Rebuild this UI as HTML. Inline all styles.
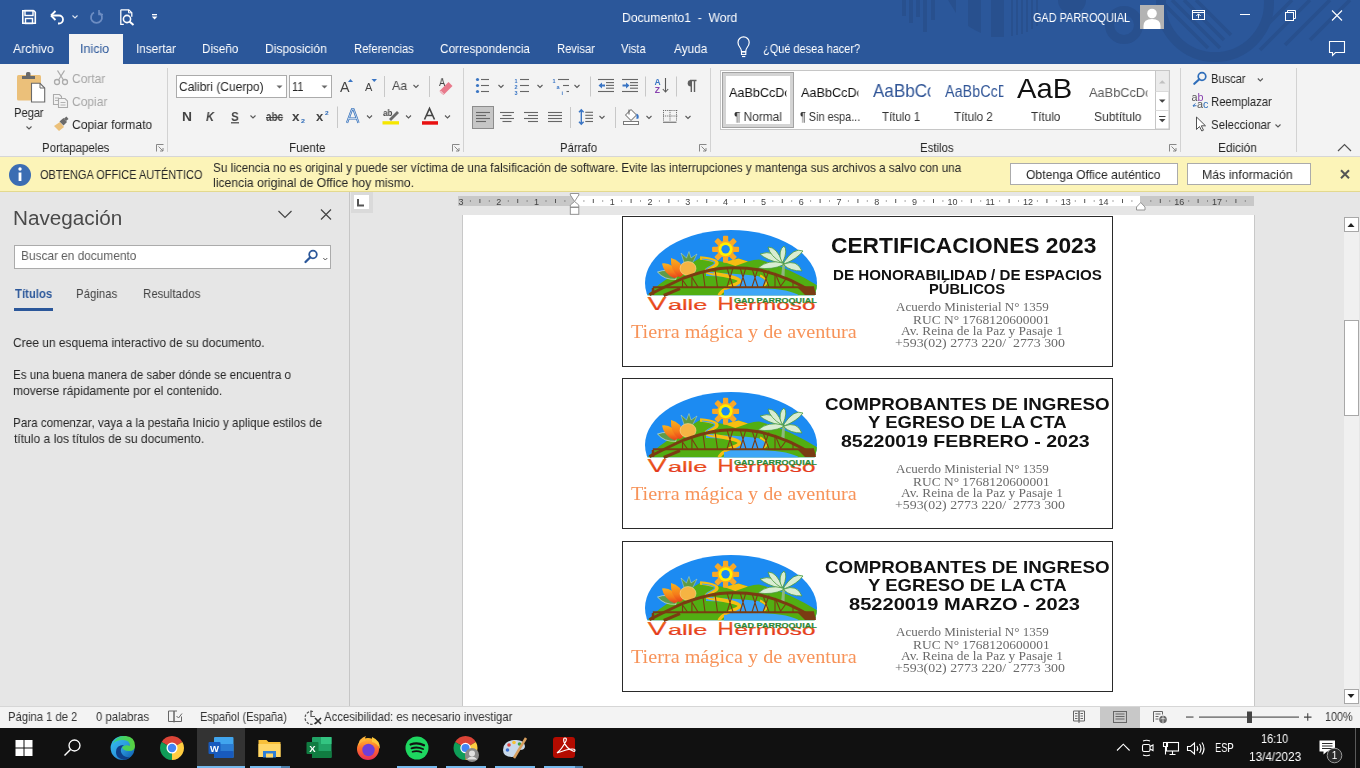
<!DOCTYPE html>
<html><head><meta charset="utf-8"><title>Documento1 - Word</title>
<style>
html,body{margin:0;padding:0;}
body{width:1360px;height:768px;overflow:hidden;position:relative;background:#E6E6E6;font-family:"Liberation Sans",sans-serif;}
.t{position:absolute;white-space:nowrap;transform-origin:0 0;will-change:transform;}
.a{position:absolute;}
svg{position:absolute;overflow:visible;}
</style></head><body>
<div class=a style='left:0px;top:0px;width:1360px;height:64px;background:#2B579A;'></div>
<svg style='left:880px;top:0px;' width='480' height='64' viewBox='880 0 480 64'>
<g fill='#28508E'>
<rect x='902' y='0' width='4' height='16'/>
<rect x='909' y='0' width='4' height='23'/>
<rect x='916' y='0' width='4' height='17'/>
<rect x='923' y='0' width='4' height='32'/>
<rect x='931' y='0' width='4' height='20'/>
<path d='M948 0 h8 v13 z'/>
<path d='M968 0 h13 v33 q-7 -3 -13 -7 z'/>
<path d='M991 0 h13 v37 h-13 z'/>
<rect x='1011' y='0' width='2' height='36'/>
<rect x='1016' y='0' width='2' height='35'/>
<rect x='1021' y='0' width='2' height='34'/>
<rect x='1026' y='0' width='2' height='32'/>
<rect x='1031' y='0' width='2' height='29'/>
<rect x='1036' y='0' width='2' height='26'/>
<circle cx='1072' cy='0' r='14'/>
</g>
<circle cx='1124' cy='25' r='14.5' fill='none' stroke='#28508E' stroke-width='9'/>
<circle cx='1215' cy='3' r='54' fill='none' stroke='#28508E' stroke-width='10'/>
<g stroke='#28508E' stroke-width='3.5'>
<path d='M1160 0 l48 48'/><path d='M1172 0 l48 48'/><path d='M1184 0 l40 40'/><path d='M1196 0 l35 35'/>
<path d='M1292 0 l-40 40'/><path d='M1310 0 l-50 50'/><path d='M1330 0 l-45 45'/><path d='M1350 0 l-40 40'/>
</g>
</svg>
<div class=a style='left:69px;top:34px;width:54px;height:30px;background:#F3F3F3;'></div>
<div class=a style='left:0px;top:64px;width:1360px;height:92px;background:#F3F3F3;'></div>
<div class=a style='left:0px;top:156px;width:1360px;height:1px;background:#D6D6D6;'></div>
<div class=a style='left:0px;top:157px;width:1360px;height:34px;background:#FCF4B8;'></div>
<div class=a style='left:0px;top:191px;width:1360px;height:1px;background:#E3D98F;'></div>
<div class=a style='left:0px;top:192px;width:349px;height:514px;background:#E6E6E6;'></div>
<div class=a style='left:349px;top:192px;width:1px;height:514px;background:#C6C6C6;'></div>
<div class=a style='left:350px;top:192px;width:1010px;height:514px;background:#E6E6E6;'></div>
<div class=a style='left:463px;top:215px;width:791px;height:491px;background:#FFFFFF;'></div>
<div class=a style='left:1254px;top:215px;width:1px;height:491px;background:#C8C8C8;'></div>
<div class=a style='left:462px;top:215px;width:1px;height:491px;background:#C8C8C8;'></div>
<div class=a style='left:351px;top:192px;width:22px;height:21px;background:#DADADA;'></div>
<div class=a style='left:354px;top:195px;width:15px;height:14px;background:#FFFFFF;'></div>
<div class=a style='left:458px;top:196px;width:796px;height:10px;background:#C8C8C8;'></div>
<div class=a style='left:575px;top:196px;width:565px;height:10px;background:#FFFFFF;'></div>
<div class=a style='left:1344px;top:232px;width:15px;height:457px;background:#F0F0F0;'></div>
<div class=a style='left:1344px;top:217px;width:15px;height:15px;background:#FFFFFF;box-sizing:border-box;border:1px solid #A8A8A8;'></div>
<div class=a style='left:1344px;top:689px;width:15px;height:15px;background:#FFFFFF;box-sizing:border-box;border:1px solid #A8A8A8;'></div>
<div class=a style='left:1344px;top:320px;width:15px;height:96px;background:#FFFFFF;box-sizing:border-box;border:1px solid #A8A8A8;'></div>
<div class=a style='left:0px;top:706px;width:1360px;height:22px;background:#F3F3F3;'></div>
<div class=a style='left:0px;top:706px;width:1360px;height:1px;background:#D6D6D6;'></div>
<div class=a style='left:1100px;top:707px;width:40px;height:21px;background:#C8C8C8;'></div>
<div class=a style='left:0px;top:728px;width:1360px;height:40px;background:#111111;'></div>
<div class=a style='left:197px;top:728px;width:48px;height:40px;background:#333333;'></div>
<div class=a style='left:176px;top:75px;width:111px;height:23px;background:#FFFFFF;box-sizing:border-box;border:1px solid #ABABAB;'></div>
<div class=a style='left:289px;top:75px;width:43px;height:23px;background:#FFFFFF;box-sizing:border-box;border:1px solid #ABABAB;'></div>
<div class=a style='left:720px;top:70px;width:450px;height:60px;background:#FFFFFF;box-sizing:border-box;border:1px solid #C6C6C6;'></div>
<div class=a style='left:1010px;top:163px;width:168px;height:22px;background:#FFFFFF;box-sizing:border-box;border:1px solid #ABABAB;'></div>
<div class=a style='left:1187px;top:163px;width:124px;height:22px;background:#FFFFFF;box-sizing:border-box;border:1px solid #ABABAB;'></div>
<div class=a style='left:14px;top:245px;width:317px;height:24px;background:#FFFFFF;box-sizing:border-box;border:1px solid #ABABAB;'></div>
<div class=a style='left:621.5px;top:215.5px;width:491px;height:151px;background:transparent;box-sizing:border-box;border:1.5px solid #2A2A2A;'></div>
<div class=a style='left:621.5px;top:377.5px;width:491px;height:151px;background:transparent;box-sizing:border-box;border:1.5px solid #2A2A2A;'></div>
<div class=a style='left:621.5px;top:540.5px;width:491px;height:151px;background:transparent;box-sizing:border-box;border:1.5px solid #2A2A2A;'></div>
<svg style='left:0;top:0' width='1' height='1'>
<defs>
<clipPath id='domeclip'><path d='M640 295.3 V226 H822 V295.3 Z'/></clipPath>
<clipPath id='domeclip2'><ellipse cx='731' cy='283' rx='86' ry='53'/></clipPath>
<linearGradient id='vh' x1='0' y1='0' x2='0' y2='1'><stop offset='0' stop-color='#F26E1E'/><stop offset='1' stop-color='#DF2A1B'/></linearGradient>
<linearGradient id='pet' x1='0' y1='0' x2='0' y2='1'><stop offset='0' stop-color='#F9B21C'/><stop offset='0.6' stop-color='#F57C1A'/><stop offset='1' stop-color='#E8401A'/></linearGradient>
<symbol id='logo' viewBox='630 220 200 100' width='200' height='100'>
<g clip-path='url(#domeclip)'><g clip-path='url(#domeclip2)'>
<rect x='640' y='226' width='182' height='70' fill='#1C8BF2'/>
<!-- hills -->
<path d='M640 296 L648 295 Q660 282 672 276 Q686 266 700 258 L724 262 L738.5 258.6 L748 261.4 Q754 259.5 759 259.4 Q790 268 818 286 L818 296 Z' fill='#52AE12'/>
<path d='M724 262 L738.5 258.6 L748 261.4 L735.3 265.9 Z' fill='#F7BE12'/>
<!-- road and river -->
<path d='M706 273 Q735 273 758 276 Q770 281 764 286 Q756 290 800 296 L724 296 Q722 291 734 286 Q746 281 738 278 Q722 276 706 276 Z' fill='#39A2F6'/>
<path d='M700 258 C712 259 724 262 712 267 C702 271 706 273 716 274 C735 277 748 280 733 285 C724 289 720 292 719 296' fill='none' stroke='#F7BE12' stroke-width='3.4'/>
<path d='M702 259 C712 260 720 262 710 266.5 C703 270 706 272 714 273' fill='none' stroke='#3FA3F0' stroke-width='1.1'/>
<path d='M760 275.5 Q771 281 764 286' fill='none' stroke='#F7BE12' stroke-width='2'/>
<path d='M724 290 Q740 287 760 288 Q790 289 800 296 L724 296 Z' fill='#3EA6F7'/>
</g></g>
<!-- sun -->
<g transform='translate(725.6 249.3)'>
<g fill='#F8A826'>
<rect x='-2.6' y='-13.5' width='5.2' height='27' rx='1'/>
<rect x='-2.6' y='-13.5' width='5.2' height='27' rx='1' transform='rotate(45)'/>
<rect x='-2.6' y='-13.5' width='5.2' height='27' rx='1' transform='rotate(90)'/>
<rect x='-2.6' y='-13.5' width='5.2' height='27' rx='1' transform='rotate(135)'/>
</g>
<circle r='8.5' fill='#F8A826'/>
<circle r='7' fill='#FFEF00'/>
<circle r='4.2' fill='#1C8BF2'/>
</g>
<!-- palm tree -->
<path d='M781 278 L782.5 263 L785 263 L784.5 278 Z' fill='#8DB87E'/>
<g fill='#D9EDD2' stroke='#4A9A3C' stroke-width='0.8'>
<path d='M783 262 Q774 249 760 254 Q766 260 783 264 Z'/>
<path d='M783 263 Q768 259 758 268 Q772 270 783 265 Z'/>
<path d='M783 262 Q788 250 784 246 Q778 250 781 262 Z'/>
<path d='M784 262 Q794 247 803 251 Q797 259 784 264 Z'/>
<path d='M784 264 Q797 259 802 271 Q790 271 784 265 Z'/>
<path d='M782 262 Q777 247 768 247 Q770 256 782 263 Z'/>
</g>
<!-- flower -->
<path d='M657.5 272 Q668 268 676 274 L676 279.4 Q664 280 657.5 272 Z' fill='#5E9B4A' stroke='#E6EEDF' stroke-width='0.6'/>
<path d='M662 263.5 Q672 262 679 274 Q678 278 674 278 Q664 274 662 263.5 Z' fill='url(#pet)'/>
<path d='M671 258 Q681 260 684 272 Q683 277 679 277 Q670 270 671 258 Z' fill='url(#pet)'/>
<!-- pineapple -->
<path d='M684.5 264 L681 253 L686.5 258 L689 251.5 L691 258 L697 254 L692 264 Z' fill='#5E9A44' stroke='#D8E8D0' stroke-width='0.4'/>
<ellipse cx='688' cy='268.5' rx='8' ry='7' fill='#F5B443' stroke='#FBE4A8' stroke-width='0.5'/>
<!-- bridge -->
<g fill='none' stroke='#7A3C12'>
<path d='M649.4 294.7 Q671 283.7 683.7 278 Q702 271 720 268.4 Q740 266.5 760 270 Q790 277 815 294' stroke-width='3'/>
<path d='M652.8 287.2 H814' stroke-width='2'/>
<path d='M663.7 295.5 L680 288.7' stroke-width='3'/>
<path d='M653 288 V295' stroke-width='2.5'/>
<g stroke-width='1.1'>
<path d='M682.5 278 V287 M682.5 280 L687.5 287 M691.9 276 V287 M691.9 277 L698 287 M703 272 L705 287 M715 269.5 L717.5 287'/>
<path d='M727 268 L733 287 M733 268 L727 287 M740 267.5 L746 287 M746 267.5 L740 287 M752 268.5 L758 287 M758 268.5 L752 287 M763 270.5 L769 287 M769 270.5 L763 287'/>
<path d='M775 273 V287 M787 277.5 L780 287 M793 281 V287 M775 273 L781 287'/>
</g>
</g>
<path d='M797 287 H814 L816 295 H805 Z' fill='#7A3C12'/>
<!-- text -->
<g fill='url(#vh)' font-family='Liberation Sans' stroke='url(#vh)' stroke-width='0.2'>
<text x='647.5' y='309.8' font-size='18.2' textLength='19' lengthAdjust='spacingAndGlyphs'>V</text>
<text x='667.9' y='309.8' font-size='14.6' textLength='39.4' lengthAdjust='spacingAndGlyphs'>alle</text>
<text x='717.6' y='309.8' font-size='18.2' textLength='16.3' lengthAdjust='spacingAndGlyphs'>H</text>
<text x='734.5' y='309.8' font-size='14.6' textLength='81' lengthAdjust='spacingAndGlyphs'>ermoso</text>
</g>
<text x='734' y='302.6' font-family='Liberation Sans' font-weight='bold' font-size='7' fill='#2A8A36' stroke='#2A8A36' stroke-width='0.2' textLength='82.7' lengthAdjust='spacingAndGlyphs'>GAD PARROQUIAL</text>
</symbol>
</defs></svg>
<svg style='left:630px;top:220px' width='200' height='100'><use href='#logo' x='0' y='0'/></svg>
<svg style='left:630px;top:382px' width='200' height='100'><use href='#logo' x='0' y='0'/></svg>
<svg style='left:630px;top:545px' width='200' height='100'><use href='#logo' x='0' y='0'/></svg>
<div class=t style='left:622.46px;top:10.95px;font-family:"Liberation Sans", sans-serif;font-size:13px;line-height:13px;color:#FFFFFF;font-weight:normal;font-style:normal;transform:scaleX(0.9352);'>Documento1&nbsp; -&nbsp; Word</div><div class=t style='left:1032.91px;top:10.95px;font-family:"Liberation Sans", sans-serif;font-size:13px;line-height:13px;color:#FFFFFF;font-weight:normal;font-style:normal;transform:scaleX(0.8370);'>GAD PARROQUIAL</div><div class=t style='left:13.00px;top:41.95px;font-family:"Liberation Sans", sans-serif;font-size:13px;line-height:13px;color:#FFFFFF;font-weight:normal;font-style:normal;transform:scaleX(0.9419);'>Archivo</div><div class=t style='left:136.09px;top:41.95px;font-family:"Liberation Sans", sans-serif;font-size:13px;line-height:13px;color:#FFFFFF;font-weight:normal;font-style:normal;transform:scaleX(0.9070);'>Insertar</div><div class=t style='left:202.10px;top:41.95px;font-family:"Liberation Sans", sans-serif;font-size:13px;line-height:13px;color:#FFFFFF;font-weight:normal;font-style:normal;transform:scaleX(0.8974);'>Diseño</div><div class=t style='left:265.07px;top:41.95px;font-family:"Liberation Sans", sans-serif;font-size:13px;line-height:13px;color:#FFFFFF;font-weight:normal;font-style:normal;transform:scaleX(0.9308);'>Disposición</div><div class=t style='left:353.54px;top:41.95px;font-family:"Liberation Sans", sans-serif;font-size:13px;line-height:13px;color:#FFFFFF;font-weight:normal;font-style:normal;transform:scaleX(0.8618);'>Referencias</div><div class=t style='left:440.09px;top:41.95px;font-family:"Liberation Sans", sans-serif;font-size:13px;line-height:13px;color:#FFFFFF;font-weight:normal;font-style:normal;transform:scaleX(0.9082);'>Correspondencia</div><div class=t style='left:557.14px;top:41.95px;font-family:"Liberation Sans", sans-serif;font-size:13px;line-height:13px;color:#FFFFFF;font-weight:normal;font-style:normal;transform:scaleX(0.8605);'>Revisar</div><div class=t style='left:621.00px;top:41.95px;font-family:"Liberation Sans", sans-serif;font-size:13px;line-height:13px;color:#FFFFFF;font-weight:normal;font-style:normal;transform:scaleX(0.8621);'>Vista</div><div class=t style='left:674.00px;top:41.95px;font-family:"Liberation Sans", sans-serif;font-size:13px;line-height:13px;color:#FFFFFF;font-weight:normal;font-style:normal;transform:scaleX(0.9054);'>Ayuda</div><div class=t style='left:762.75px;top:41.95px;font-family:"Liberation Sans", sans-serif;font-size:13px;line-height:13px;color:#FFFFFF;font-weight:normal;font-style:normal;transform:scaleX(0.8456);'>¿Qué desea hacer?</div><div class=t style='left:80.03px;top:41.95px;font-family:"Liberation Sans", sans-serif;font-size:13px;line-height:13px;color:#2B579A;font-weight:normal;font-style:normal;transform:scaleX(0.9655);'>Inicio</div><div class=t style='left:13.90px;top:105.95px;font-family:"Liberation Sans", sans-serif;font-size:13px;line-height:13px;color:#262626;font-weight:normal;font-style:normal;transform:scaleX(0.8529);'>Pegar</div><div class=t style='left:71.83px;top:71.95px;font-family:"Liberation Sans", sans-serif;font-size:13px;line-height:13px;color:#A6A6A6;font-weight:normal;font-style:normal;transform:scaleX(0.9214);'>Cortar</div><div class=t style='left:71.82px;top:94.95px;font-family:"Liberation Sans", sans-serif;font-size:13px;line-height:13px;color:#A6A6A6;font-weight:normal;font-style:normal;transform:scaleX(0.9257);'>Copiar</div><div class=t style='left:71.82px;top:117.95px;font-family:"Liberation Sans", sans-serif;font-size:13px;line-height:13px;color:#262626;font-weight:normal;font-style:normal;transform:scaleX(0.9324);'>Copiar formato</div><div class=t style='left:41.62px;top:140.95px;font-family:"Liberation Sans", sans-serif;font-size:13px;line-height:13px;color:#262626;font-weight:normal;font-style:normal;transform:scaleX(0.8787);'>Portapapeles</div><div class=t style='left:178.68px;top:79.95px;font-family:"Liberation Sans", sans-serif;font-size:13px;line-height:13px;color:#262626;font-weight:normal;font-style:normal;transform:scaleX(0.9211);'>Calibri (Cuerpo)</div><div class=t style='left:291.95px;top:79.95px;font-family:"Liberation Sans", sans-serif;font-size:13px;line-height:13px;color:#262626;font-weight:normal;font-style:normal;transform:scaleX(0.8500);'>11</div><div class=t style='left:288.60px;top:140.95px;font-family:"Liberation Sans", sans-serif;font-size:13px;line-height:13px;color:#262626;font-weight:normal;font-style:normal;transform:scaleX(0.9026);'>Fuente</div><div class=t style='left:559.53px;top:140.95px;font-family:"Liberation Sans", sans-serif;font-size:13px;line-height:13px;color:#262626;font-weight:normal;font-style:normal;transform:scaleX(0.8683);'>Párrafo</div><div class=t style='left:733.90px;top:109.95px;font-family:"Liberation Sans", sans-serif;font-size:13px;line-height:13px;color:#333333;font-weight:normal;font-style:normal;transform:scaleX(0.9135);'>¶ Normal</div><div class=t style='left:799.60px;top:109.95px;font-family:"Liberation Sans", sans-serif;font-size:13px;line-height:13px;color:#333333;font-weight:normal;font-style:normal;transform:scaleX(0.8366);'>¶ Sin espa...</div><div class=t style='left:882.00px;top:109.95px;font-family:"Liberation Sans", sans-serif;font-size:13px;line-height:13px;color:#333333;font-weight:normal;font-style:normal;transform:scaleX(0.8837);'>Título 1</div><div class=t style='left:954.00px;top:109.95px;font-family:"Liberation Sans", sans-serif;font-size:13px;line-height:13px;color:#333333;font-weight:normal;font-style:normal;transform:scaleX(0.8953);'>Título 2</div><div class=t style='left:1031.30px;top:109.95px;font-family:"Liberation Sans", sans-serif;font-size:13px;line-height:13px;color:#333333;font-weight:normal;font-style:normal;transform:scaleX(0.9031);'>Título</div><div class=t style='left:1093.77px;top:109.95px;font-family:"Liberation Sans", sans-serif;font-size:13px;line-height:13px;color:#333333;font-weight:normal;font-style:normal;transform:scaleX(0.9260);'>Subtítulo</div><div class=t style='left:920.12px;top:140.95px;font-family:"Liberation Sans", sans-serif;font-size:13px;line-height:13px;color:#262626;font-weight:normal;font-style:normal;transform:scaleX(0.8784);'>Estilos</div><div class=t style='left:1210.85px;top:71.95px;font-family:"Liberation Sans", sans-serif;font-size:13px;line-height:13px;color:#262626;font-weight:normal;font-style:normal;transform:scaleX(0.8500);'>Buscar</div><div class=t style='left:1210.83px;top:94.95px;font-family:"Liberation Sans", sans-serif;font-size:13px;line-height:13px;color:#262626;font-weight:normal;font-style:normal;transform:scaleX(0.8681);'>Reemplazar</div><div class=t style='left:1210.82px;top:117.95px;font-family:"Liberation Sans", sans-serif;font-size:13px;line-height:13px;color:#262626;font-weight:normal;font-style:normal;transform:scaleX(0.8806);'>Seleccionar</div><div class=t style='left:1218.39px;top:140.95px;font-family:"Liberation Sans", sans-serif;font-size:13px;line-height:13px;color:#262626;font-weight:normal;font-style:normal;transform:scaleX(0.9098);'>Edición</div><div class=t style='left:39.95px;top:168.45px;font-family:"Liberation Sans", sans-serif;font-size:13px;line-height:13px;color:#262626;font-weight:normal;font-style:normal;transform:scaleX(0.8455);'>OBTENGA OFFICE AUTÉNTICO</div><div class=t style='left:212.80px;top:160.95px;font-family:"Liberation Sans", sans-serif;font-size:13px;line-height:13px;color:#262626;font-weight:normal;font-style:normal;transform:scaleX(0.9028);'>Su licencia no es original y puede ser víctima de una falsificación de software. Evite las interrupciones y mantenga sus archivos a salvo con una</div><div class=t style='left:212.76px;top:176.45px;font-family:"Liberation Sans", sans-serif;font-size:13px;line-height:13px;color:#262626;font-weight:normal;font-style:normal;transform:scaleX(0.9377);'>licencia original de Office hoy mismo.</div><div class=t style='left:1025.56px;top:167.95px;font-family:"Liberation Sans", sans-serif;font-size:13px;line-height:13px;color:#262626;font-weight:normal;font-style:normal;transform:scaleX(0.9373);'>Obtenga Office auténtico</div><div class=t style='left:1202.05px;top:167.95px;font-family:"Liberation Sans", sans-serif;font-size:13px;line-height:13px;color:#262626;font-weight:normal;font-style:normal;transform:scaleX(0.9500);'>Más información</div><div class=t style='left:12.83px;top:208.00px;font-family:"Liberation Sans", sans-serif;font-size:20px;line-height:20px;color:#4A4A4A;font-weight:normal;font-style:normal;transform:scaleX(1.0350);'>Navegación</div><div class=t style='left:20.99px;top:249.15px;font-family:"Liberation Sans", sans-serif;font-size:13px;line-height:13px;color:#5F5F5F;font-weight:normal;font-style:normal;transform:scaleX(0.9120);'>Buscar en documento</div><div class=t style='left:14.90px;top:287.25px;font-family:"Liberation Sans", sans-serif;font-size:13px;line-height:13px;color:#2B579A;font-weight:bold;font-style:normal;transform:scaleX(0.8714);'>Títulos</div><div class=t style='left:76.32px;top:287.25px;font-family:"Liberation Sans", sans-serif;font-size:13px;line-height:13px;color:#444444;font-weight:normal;font-style:normal;transform:scaleX(0.8783);'>Páginas</div><div class=t style='left:143.22px;top:287.25px;font-family:"Liberation Sans", sans-serif;font-size:13px;line-height:13px;color:#444444;font-weight:normal;font-style:normal;transform:scaleX(0.8844);'>Resultados</div><div class=t style='left:13.28px;top:336.35px;font-family:"Liberation Sans", sans-serif;font-size:13px;line-height:13px;color:#262626;font-weight:normal;font-style:normal;transform:scaleX(0.9210);'>Cree un esquema interactivo de su documento.</div><div class=t style='left:13.31px;top:367.95px;font-family:"Liberation Sans", sans-serif;font-size:13px;line-height:13px;color:#262626;font-weight:normal;font-style:normal;transform:scaleX(0.8923);'>Es una buena manera de saber dónde se encuentra o</div><div class=t style='left:13.27px;top:383.95px;font-family:"Liberation Sans", sans-serif;font-size:13px;line-height:13px;color:#262626;font-weight:normal;font-style:normal;transform:scaleX(0.9287);'>moverse rápidamente por el contenido.</div><div class=t style='left:13.30px;top:415.65px;font-family:"Liberation Sans", sans-serif;font-size:13px;line-height:13px;color:#262626;font-weight:normal;font-style:normal;transform:scaleX(0.8965);'>Para comenzar, vaya a la pestaña Inicio y aplique estilos de</div><div class=t style='left:14.20px;top:431.55px;font-family:"Liberation Sans", sans-serif;font-size:13px;line-height:13px;color:#262626;font-weight:normal;font-style:normal;transform:scaleX(0.9294);'>título a los títulos de su documento.</div><div class=t style='left:7.74px;top:709.95px;font-family:"Liberation Sans", sans-serif;font-size:13px;line-height:13px;color:#333333;font-weight:normal;font-style:normal;transform:scaleX(0.8633);'>Página 1 de 2</div><div class=t style='left:95.50px;top:709.95px;font-family:"Liberation Sans", sans-serif;font-size:13px;line-height:13px;color:#333333;font-weight:normal;font-style:normal;transform:scaleX(0.8750);'>0 palabras</div><div class=t style='left:199.86px;top:709.95px;font-family:"Liberation Sans", sans-serif;font-size:13px;line-height:13px;color:#333333;font-weight:normal;font-style:normal;transform:scaleX(0.8402);'>Español (España)</div><div class=t style='left:324.20px;top:709.95px;font-family:"Liberation Sans", sans-serif;font-size:13px;line-height:13px;color:#333333;font-weight:normal;font-style:normal;transform:scaleX(0.8718);'>Accesibilidad: es necesario investigar</div><div class=t style='left:1324.97px;top:709.95px;font-family:"Liberation Sans", sans-serif;font-size:13px;line-height:13px;color:#333333;font-weight:normal;font-style:normal;transform:scaleX(0.8281);'>100%</div><div class=t style='left:1214.93px;top:741.80px;font-family:"Liberation Sans", sans-serif;font-size:12px;line-height:12px;color:#FFFFFF;font-weight:normal;font-style:normal;transform:scaleX(0.7739);'>ESP</div><div class=t style='left:1261.09px;top:732.80px;font-family:"Liberation Sans", sans-serif;font-size:12px;line-height:12px;color:#FFFFFF;font-weight:normal;font-style:normal;transform:scaleX(0.9069);'>16:10</div><div class=t style='left:1249.02px;top:750.80px;font-family:"Liberation Sans", sans-serif;font-size:12px;line-height:12px;color:#FFFFFF;font-weight:normal;font-style:normal;transform:scaleX(0.9769);'>13/4/2023</div><div class=t style='left:831.37px;top:235.10px;font-family:"Liberation Sans", sans-serif;font-size:22px;line-height:22px;color:#111111;font-weight:bold;font-style:normal;transform:scaleX(1.0337);'>CERTIFICACIONES 2023</div><div class=t style='left:832.82px;top:268.10px;font-family:"Liberation Sans", sans-serif;font-size:14px;line-height:14px;color:#111111;font-weight:bold;font-style:normal;transform:scaleX(1.0814);'>DE HONORABILIDAD / DE ESPACIOS</div><div class=t style='left:928.75px;top:282.40px;font-family:"Liberation Sans", sans-serif;font-size:14px;line-height:14px;color:#111111;font-weight:bold;font-style:normal;transform:scaleX(1.0507);'>PÚBLICOS</div><div class=t style='left:896.26px;top:302.45px;font-family:"Liberation Serif", serif;font-size:11.5px;line-height:11.5px;color:#6A6A6A;font-weight:normal;font-style:normal;transform:scaleX(1.1353);'>Acuerdo Ministerial N° 1359</div><div class=t style='left:913.43px;top:314.65px;font-family:"Liberation Serif", serif;font-size:11.5px;line-height:11.5px;color:#6A6A6A;font-weight:normal;font-style:normal;transform:scaleX(1.1670);'>RUC N° 1768120600001</div><div class=t style='left:900.84px;top:326.45px;font-family:"Liberation Serif", serif;font-size:11.5px;line-height:11.5px;color:#6A6A6A;font-weight:normal;font-style:normal;transform:scaleX(1.1650);'>Av. Reina de la Paz y Pasaje 1</div><div class=t style='left:894.99px;top:338.45px;font-family:"Liberation Serif", serif;font-size:11.5px;line-height:11.5px;color:#6A6A6A;font-weight:normal;font-style:normal;transform:scaleX(1.2057);'>+593(02) 2773 220/&nbsp; 2773 300</div><div class=t style='left:631.40px;top:322.13px;font-family:"Liberation Serif", serif;font-size:19px;line-height:19px;color:#F79359;font-weight:normal;font-style:normal;transform:scaleX(1.0627);'>Tierra mágica y de aventura</div><div class=t style='left:824.70px;top:395.95px;font-family:"Liberation Sans", sans-serif;font-size:17px;line-height:17px;color:#111111;font-weight:bold;font-style:normal;transform:scaleX(1.1035);'>COMPROBANTES DE INGRESO</div><div class=t style='left:868.00px;top:413.95px;font-family:"Liberation Sans", sans-serif;font-size:17px;line-height:17px;color:#111111;font-weight:bold;font-style:normal;transform:scaleX(1.0912);'>Y EGRESO DE LA CTA</div><div class=t style='left:840.60px;top:433.05px;font-family:"Liberation Sans", sans-serif;font-size:17px;line-height:17px;color:#111111;font-weight:bold;font-style:normal;transform:scaleX(1.1491);'>85220019 FEBRERO - 2023</div><div class=t style='left:896.26px;top:464.45px;font-family:"Liberation Serif", serif;font-size:11.5px;line-height:11.5px;color:#6A6A6A;font-weight:normal;font-style:normal;transform:scaleX(1.1353);'>Acuerdo Ministerial N° 1359</div><div class=t style='left:913.43px;top:476.65px;font-family:"Liberation Serif", serif;font-size:11.5px;line-height:11.5px;color:#6A6A6A;font-weight:normal;font-style:normal;transform:scaleX(1.1670);'>RUC N° 1768120600001</div><div class=t style='left:900.84px;top:488.45px;font-family:"Liberation Serif", serif;font-size:11.5px;line-height:11.5px;color:#6A6A6A;font-weight:normal;font-style:normal;transform:scaleX(1.1650);'>Av. Reina de la Paz y Pasaje 1</div><div class=t style='left:894.99px;top:500.45px;font-family:"Liberation Serif", serif;font-size:11.5px;line-height:11.5px;color:#6A6A6A;font-weight:normal;font-style:normal;transform:scaleX(1.2057);'>+593(02) 2773 220/&nbsp; 2773 300</div><div class=t style='left:631.40px;top:484.13px;font-family:"Liberation Serif", serif;font-size:19px;line-height:19px;color:#F79359;font-weight:normal;font-style:normal;transform:scaleX(1.0627);'>Tierra mágica y de aventura</div><div class=t style='left:824.70px;top:558.95px;font-family:"Liberation Sans", sans-serif;font-size:17px;line-height:17px;color:#111111;font-weight:bold;font-style:normal;transform:scaleX(1.1035);'>COMPROBANTES DE INGRESO</div><div class=t style='left:868.00px;top:576.95px;font-family:"Liberation Sans", sans-serif;font-size:17px;line-height:17px;color:#111111;font-weight:bold;font-style:normal;transform:scaleX(1.0912);'>Y EGRESO DE LA CTA</div><div class=t style='left:849.30px;top:596.05px;font-family:"Liberation Sans", sans-serif;font-size:17px;line-height:17px;color:#111111;font-weight:bold;font-style:normal;transform:scaleX(1.1810);'>85220019 MARZO - 2023</div><div class=t style='left:896.26px;top:627.46px;font-family:"Liberation Serif", serif;font-size:11.5px;line-height:11.5px;color:#6A6A6A;font-weight:normal;font-style:normal;transform:scaleX(1.1353);'>Acuerdo Ministerial N° 1359</div><div class=t style='left:913.43px;top:639.66px;font-family:"Liberation Serif", serif;font-size:11.5px;line-height:11.5px;color:#6A6A6A;font-weight:normal;font-style:normal;transform:scaleX(1.1670);'>RUC N° 1768120600001</div><div class=t style='left:900.84px;top:651.46px;font-family:"Liberation Serif", serif;font-size:11.5px;line-height:11.5px;color:#6A6A6A;font-weight:normal;font-style:normal;transform:scaleX(1.1650);'>Av. Reina de la Paz y Pasaje 1</div><div class=t style='left:894.99px;top:663.46px;font-family:"Liberation Serif", serif;font-size:11.5px;line-height:11.5px;color:#6A6A6A;font-weight:normal;font-style:normal;transform:scaleX(1.2057);'>+593(02) 2773 220/&nbsp; 2773 300</div><div class=t style='left:631.40px;top:647.13px;font-family:"Liberation Serif", serif;font-size:19px;line-height:19px;color:#F79359;font-weight:normal;font-style:normal;transform:scaleX(1.0627);'>Tierra mágica y de aventura</div><div class=t style='left:181.84px;top:109.95px;font-family:"Liberation Sans", sans-serif;font-size:13px;line-height:13px;color:#444444;font-weight:bold;font-style:normal;transform:scaleX(1.0625);'>N</div><div class=t style='left:205.90px;top:109.95px;font-family:"Liberation Sans", sans-serif;font-size:13px;line-height:13px;color:#444444;font-weight:bold;font-style:italic;transform:scaleX(0.8500);'>K</div><div class=t style='left:231.10px;top:109.95px;font-family:"Liberation Sans", sans-serif;font-size:13px;line-height:13px;color:#444444;font-weight:bold;font-style:normal;transform:scaleX(0.9000);'>S</div><div class=t style='left:266.00px;top:110.80px;font-family:"Liberation Sans", sans-serif;font-size:12px;line-height:12px;color:#444444;font-weight:bold;font-style:normal;transform:scaleX(0.8200);text-decoration:line-through;'>abc</div><div class=t style='left:292.10px;top:109.95px;font-family:"Liberation Sans", sans-serif;font-size:13px;line-height:13px;color:#444444;font-weight:bold;font-style:normal;transform:scaleX(1.0429);'>x</div><div class=t style='left:300.60px;top:117.70px;font-family:"Liberation Sans", sans-serif;font-size:6px;line-height:6px;color:#2E6BB8;font-weight:bold;font-style:normal;transform:scaleX(1.2000);'>2</div><div class=t style='left:316.40px;top:109.95px;font-family:"Liberation Sans", sans-serif;font-size:13px;line-height:13px;color:#444444;font-weight:bold;font-style:normal;transform:scaleX(0.9857);'>x</div><div class=t style='left:324.90px;top:109.80px;font-family:"Liberation Sans", sans-serif;font-size:6px;line-height:6px;color:#2E6BB8;font-weight:bold;font-style:normal;transform:scaleX(1.1000);'>2</div><div class=t style='left:340.30px;top:79.90px;font-family:"Liberation Sans", sans-serif;font-size:14px;line-height:14px;color:#444444;font-weight:normal;font-style:normal;transform:scaleX(1.0222);'>A</div><div class=t style='left:365.30px;top:82.45px;font-family:"Liberation Sans", sans-serif;font-size:11px;line-height:11px;color:#444444;font-weight:normal;font-style:normal;transform:scaleX(0.9857);'>A</div><div class=t style='left:392.00px;top:78.85px;font-family:"Liberation Sans", sans-serif;font-size:13px;line-height:13px;color:#4A4A4A;font-weight:normal;font-style:normal;transform:scaleX(0.9500);'>Aa</div><div class=t style='left:438.90px;top:77.35px;font-family:"Liberation Sans", sans-serif;font-size:11px;line-height:11px;color:#444444;font-weight:normal;font-style:normal;transform:scaleX(0.8429);'>A</div><div class=t style='left:383.00px;top:109.35px;font-family:"Liberation Sans", sans-serif;font-size:9px;line-height:9px;color:#444444;font-weight:bold;font-style:normal;transform:scaleX(0.9000);'>ab</div><div class=t style='left:728.80px;top:85.53px;font-family:"Liberation Sans", sans-serif;font-size:13.5px;line-height:13.5px;color:#111111;font-weight:normal;font-style:normal;transform:scaleX(0.9356);'>AaBbCcDc</div><div class=t style='left:800.60px;top:85.53px;font-family:"Liberation Sans", sans-serif;font-size:13.5px;line-height:13.5px;color:#111111;font-weight:normal;font-style:normal;transform:scaleX(0.9390);'>AaBbCcDc</div><div class=t style='left:873.00px;top:82.28px;font-family:"Liberation Sans", sans-serif;font-size:18.5px;line-height:18.5px;color:#2F5496;font-weight:normal;font-style:normal;transform:scaleX(0.9224);'>AaBbCc</div><div class=t style='left:944.50px;top:83.90px;font-family:"Liberation Sans", sans-serif;font-size:16px;line-height:16px;color:#2F5496;font-weight:normal;font-style:normal;transform:scaleX(0.8983);'>AaBbCcD</div><div class=t style='left:1016.90px;top:74.62px;font-family:"Liberation Sans", sans-serif;font-size:27.5px;line-height:27.5px;color:#111111;font-weight:normal;font-style:normal;transform:scaleX(1.0618);'>AaB</div><div class=t style='left:1089.30px;top:85.69px;font-family:"Liberation Sans", sans-serif;font-size:13.3px;line-height:13.3px;color:#5A5A5A;font-weight:normal;font-style:normal;transform:scaleX(0.9603);'>AaBbCcDc</div>
<svg style='left:0px;top:0px;' width='200' height='32' viewBox='0 0 200 32'>
<g fill='none' stroke='#fff' stroke-width='1.6'>
<path d='M22.8 10.8 h11 l1.5 1.5 v11 h-12.5 z'/>
</g>
<rect x='25' y='10.5' width='8' height='5' fill='none' stroke='#fff' stroke-width='1.4'/>
<rect x='25.5' y='18.5' width='7' height='5' fill='none' stroke='#fff' stroke-width='1.4'/>
<path d='M52 15.5 h7 a4 4 0 0 1 0 8 h-1' fill='none' stroke='#fff' stroke-width='1.8'/>
<path d='M51 15.5 l4.5 -4.5 M51 15.5 l4.5 4.5' fill='none' stroke='#fff' stroke-width='1.8'/>
<path d='M72.5 15.5 l2.5 2.5 l2.5 -2.5' fill='none' stroke='#DCE4F0' stroke-width='1.1'/>
<path d='M99 12.5 a5.5 5.5 0 1 1 -5 0' fill='none' stroke='#6D8DC2' stroke-width='1.8'/>
<path d='M99 10 v4.5 h4' fill='none' stroke='#6D8DC2' stroke-width='1.6'/>
<path d='M120.8 9.8 h8 l3 3 v4 M120.8 9.8 v14.5 h3' fill='none' stroke='#fff' stroke-width='1.3'/>
<path d='M128.5 9.8 v3 h3' fill='none' stroke='#fff' stroke-width='1'/>
<circle cx='127' cy='19' r='3.6' fill='none' stroke='#fff' stroke-width='1.6'/>
<path d='M129.5 21.5 l4 3.5' stroke='#fff' stroke-width='2'/>
<rect x='152' y='14' width='5' height='1.3' fill='#fff'/>
<path d='M151.8 16.5 h5.6 l-2.8 3 z' fill='#fff'/>
</svg>
<svg style='left:1130px;top:0px;' width='230' height='64' viewBox='1130 0 230 64'>
<rect x='1140' y='5' width='24' height='24' fill='#B3B3B3'/>
<circle cx='1152' cy='13.5' r='4.8' fill='#fff'/>
<path d='M1143.5 29 v-3 q0 -7 8.5 -7 q8.5 0 8.5 7 v3 z' fill='#fff'/>
<rect x='1192.5' y='10.5' width='12' height='9' fill='none' stroke='#fff' stroke-width='1'/>
<path d='M1192.5 12.5 h12' stroke='#fff' stroke-width='1'/>
<path d='M1198.5 18.5 v-4.5 M1196.3 16 l2.2 -2.2 l2.2 2.2' fill='none' stroke='#fff' stroke-width='1'/>
<rect x='1240' y='14' width='10' height='1' fill='#fff'/>
<rect x='1285.5' y='12.5' width='8' height='8' fill='none' stroke='#fff' stroke-width='1'/>
<path d='M1287.5 12.5 v-2 h8 v8 h-2' fill='none' stroke='#fff' stroke-width='1'/>
<path d='M1332 10.5 l10 10 M1342 10.5 l-10 10' stroke='#fff' stroke-width='1.1'/>
<path d='M1329.5 41.5 h15 v11 h-9 l-3 3 v-3 h-3 z' fill='none' stroke='#fff' stroke-width='1.1'/>
</svg>
<svg style='left:730px;top:36px;' width='30' height='26' viewBox='730 36 30 26'>
<path d='M741.5 51.5 q0 -2 -1.5 -4 q-2 -2.5 -2 -5 a5.6 5.6 0 0 1 11.2 0 q0 2.5 -2 5 q-1.5 2 -1.5 4 z' fill='none' stroke='#fff' stroke-width='1.2'/>
<rect x='741.5' y='52' width='4.3' height='2.5' fill='none' stroke='#fff' stroke-width='1.1'/>
<rect x='742' y='56' width='3.3' height='1.1' fill='#fff'/>
</svg>
<svg style='left:0px;top:64px;' width='470' height='92' viewBox='0 64 470 92'>
<rect x='17' y='75' width='24' height='25.5' rx='1.5' fill='#EBC07A'/>
<path d='M22 79 v-3 h4 v-2.5 q0 -1.5 1.5 -1.5 h1.5 q1.5 0 1.5 1.5 v2.5 h4.5 v3 z' fill='#6A6A6A'/>
<path d='M31.5 83.3 h8.5 l4.7 4.7 v14 h-13.2 z' fill='#fff' stroke='#6A6A6A' stroke-width='1.1'/>
<path d='M40 83.3 v4.7 h4.7' fill='none' stroke='#6A6A6A' stroke-width='1'/>
<path d='M26.5 126.5 l2.5 2.5 l2.5 -2.5' fill='none' stroke='#595959' stroke-width='1.1'/>
<!-- scissors -->
<g fill='none' stroke='#ABABAB' stroke-width='1.3'>
<circle cx='57' cy='82' r='2.5'/><circle cx='65' cy='82' r='2.5'/>
<path d='M58.5 80 l6 -9.5 M63.5 80 l-6 -9.5'/>
</g>
<!-- copy -->
<g fill='#F3F3F3' stroke='#ABABAB' stroke-width='1.1'>
<path d='M53.5 94.5 h6 l2 2 v8 h-8 z'/>
<path d='M58.5 98.5 h6.5 l2.5 2.5 v6.5 h-9 z'/>
<path d='M55 98 h4 M55 100.5 h3 M60.5 102.5 h5 M60.5 105 h5' stroke-width='0.9'/>
</g>
<!-- format painter -->
<path d='M54 126 l6 -4 l4 5 l-5 4 z' fill='#EBC07A'/>
<path d='M59.5 121.5 l4 -3.5 l3.5 4 l-3.5 3.5 z' fill='#6A6A6A'/>
<path d='M64 118.5 l2.5 -2 l2 2.5 l-2.5 2 z' fill='#6A6A6A'/>
<!-- dialog launchers -->
<g fill='none' stroke='#7A7A7A' stroke-width='0.9'>
<path d='M156.5 151.5 v-7 h7'/><path d='M158.5 146.5 l4.5 4.5 M163 148 v3 h-3'/>
<path d='M452.5 151.5 v-7 h7'/><path d='M454.5 146.5 l4.5 4.5 M459 148 v3 h-3'/>
</g>
<!-- separators -->
<rect x='167' y='68' width='1' height='84' fill='#D2D2D2'/>
<rect x='463' y='68' width='1' height='84' fill='#D2D2D2'/>
<!-- font boxes -->
<path d='M276.5 85.5 h6 l-3 3 z' fill='#6A6A6A'/>
<path d='M321.5 85.5 h6 l-3 3 z' fill='#6A6A6A'/>
<path d='M348 82 h5 l-2.5 -3 z' fill='#3A75C4'/>
<path d='M371.5 79 h5.5 l-2.75 3 z' fill='#3A75C4'/>
<rect x='384' y='76' width='1' height='21' fill='#C8C8C8'/>
<rect x='429' y='76' width='1' height='21' fill='#C8C8C8'/>
<path d='M413.5 85 l2.5 2.5 l2.5 -2.5' fill='none' stroke='#595959' stroke-width='1.1'/>
<path d='M441 93 l-1.5 -2 l9 -9 l4 4 l-9 9 z' fill='#E8798B'/>
<path d='M440.5 91 l3.5 3.5' stroke='#F3F3F3' stroke-width='1'/>
<!-- row2 -->
<rect x='231' y='122.2' width='8' height='1.2' fill='#444'/>
<path d='M250.5 115.5 l2.5 2.5 l2.5 -2.5' fill='none' stroke='#595959' stroke-width='1.1'/>
<rect x='337' y='106.5' width='1' height='21.5' fill='#C8C8C8'/>
<path d='M347 122.8 l5 -13.5 h1.5 l5 13.5 M348.5 118.5 h8.5' fill='none' stroke='#2E6BB8' stroke-width='2.2'/>
<path d='M347 122.8 l5 -13.5 h1.5 l5 13.5 M348.5 118.5 h8.5' fill='none' stroke='#DCE8F5' stroke-width='0.8'/>
<path d='M367 115.5 l2.5 2.5 l2.5 -2.5' fill='none' stroke='#595959' stroke-width='1.1'/>
<path d='M389 119 l8 -8 l2 2 l-8 8 z' fill='#6A6A6A'/>
<rect x='382.5' y='121.2' width='16.5' height='3.3' fill='#F5E600'/>
<path d='M406 115.5 l2.5 2.5 l2.5 -2.5' fill='none' stroke='#595959' stroke-width='1.1'/>
<rect x='422' y='121.2' width='16' height='3.5' fill='#E81010'/>
<path d='M424.5 119.5 l5 -11 l5 11 M426.5 115.5 h6' fill='none' stroke='#444' stroke-width='1.6'/>
<path d='M445 115.5 l2.5 2.5 l2.5 -2.5' fill='none' stroke='#595959' stroke-width='1.1'/>
</svg>
<svg style='left:460px;top:64px;' width='260' height='92' viewBox='460 64 260 92'><circle cx='477.5' cy='79.5' r='1.6' fill='#3A75C4'/><circle cx='477.5' cy='85.5' r='1.6' fill='#3A75C4'/><circle cx='477.5' cy='91.5' r='1.6' fill='#3A75C4'/><rect x='481' y='78.95' width='8' height='1.1' fill='#666'/><rect x='481' y='84.95' width='8' height='1.1' fill='#666'/><rect x='481' y='90.95' width='8' height='1.1' fill='#666'/><path d='M498.5 85 l2.5 2.5 l2.5 -2.5' fill='none' stroke='#595959' stroke-width='1.1'/><rect x='520' y='78.95' width='9' height='1.1' fill='#666'/><rect x='520' y='84.95' width='9' height='1.1' fill='#666'/><rect x='520' y='90.95' width='9' height='1.1' fill='#666'/><text x='514.5' y='82.5' font-size='5.5' font-weight='bold' fill='#3A75C4' font-family='Liberation Sans'>1</text><text x='514.5' y='88.5' font-size='5.5' font-weight='bold' fill='#3A75C4' font-family='Liberation Sans'>2</text><text x='514.5' y='94.5' font-size='5.5' font-weight='bold' fill='#3A75C4' font-family='Liberation Sans'>3</text><path d='M537.5 85 l2.5 2.5 l2.5 -2.5' fill='none' stroke='#595959' stroke-width='1.1'/><rect x='558' y='78.95' width='11' height='1.1' fill='#666'/><rect x='563' y='84.95' width='6' height='1.1' fill='#666'/><rect x='566.5' y='90.95' width='2.5' height='1.1' fill='#666'/><text x='552.5' y='82.5' font-size='5.5' font-weight='bold' fill='#3A75C4' font-family='Liberation Sans'>1</text><text x='556.5' y='88.5' font-size='5.5' font-weight='bold' fill='#3A75C4' font-family='Liberation Sans'>a</text><text x='561.5' y='94.5' font-size='5.5' font-weight='bold' fill='#3A75C4' font-family='Liberation Sans'>i</text><path d='M574.5 85 l2.5 2.5 l2.5 -2.5' fill='none' stroke='#595959' stroke-width='1.1'/><rect x='590' y='76.5' width='1' height='20' fill='#C8C8C8'/><rect x='598' y='78.95' width='16' height='1.1' fill='#666'/><rect x='598' y='90.95' width='16' height='1.1' fill='#666'/><rect x='606' y='82.05' width='8' height='1.1' fill='#666'/><rect x='606' y='84.85000000000001' width='8' height='1.1' fill='#666'/><rect x='606' y='87.65' width='8' height='1.1' fill='#666'/><path d='M598.5 85.4 l3.5 -3 v2 h3 v2 h-3 v2 z' fill='#3A75C4'/><rect x='622' y='78.95' width='16' height='1.1' fill='#666'/><rect x='622' y='90.95' width='16' height='1.1' fill='#666'/><rect x='630' y='82.05' width='8' height='1.1' fill='#666'/><rect x='630' y='84.85000000000001' width='8' height='1.1' fill='#666'/><rect x='630' y='87.65' width='8' height='1.1' fill='#666'/><path d='M629.5 85.4 l-3.5 -3 v2 h-3.5 v2 h3.5 v2 z' fill='#3A75C4'/><rect x='645' y='76.5' width='1' height='20' fill='#C8C8C8'/><text x='654.5' y='84.8' font-size='8.5' font-weight='bold' fill='#3A75C4' font-family='Liberation Sans'>A</text><text x='654.8' y='92.8' font-size='8.5' font-weight='bold' fill='#8A44B0' font-family='Liberation Sans'>Z</text><path d='M665.5 78 v14 M662.8 89 l2.7 3 l2.7 -3' fill='none' stroke='#595959' stroke-width='1.1'/><rect x='676' y='76.5' width='1' height='20' fill='#C8C8C8'/><path d='M690 80.5 h6.5 M691.3 80.5 v11.5 M694.5 80.5 v11.5' stroke='#5F5F5F' stroke-width='1.4' fill='none'/><path d='M691 80 a3.3 3.3 0 0 0 0 6.6 z' fill='#5F5F5F'/><rect x='472.5' y='106.5' width='21' height='22' fill='#C6C6C6' stroke='#8C8C8C' stroke-width='1'/><rect x='476' y='111.95' width='14' height='1.1' fill='#666'/><rect x='476' y='117.95' width='14' height='1.1' fill='#666'/><rect x='476' y='114.95' width='10' height='1.1' fill='#666'/><rect x='476' y='120.95' width='10' height='1.1' fill='#666'/><rect x='500' y='111.95' width='14' height='1.1' fill='#666'/><rect x='500' y='117.95' width='14' height='1.1' fill='#666'/><rect x='502.5' y='114.95' width='9.0' height='1.1' fill='#666'/><rect x='502.5' y='120.95' width='9.0' height='1.1' fill='#666'/><rect x='524' y='111.95' width='14' height='1.1' fill='#666'/><rect x='524' y='117.95' width='14' height='1.1' fill='#666'/><rect x='528' y='114.95' width='10' height='1.1' fill='#666'/><rect x='528' y='120.95' width='10' height='1.1' fill='#666'/><rect x='548' y='111.95' width='14' height='1.1' fill='#666'/><rect x='548' y='114.95' width='14' height='1.1' fill='#666'/><rect x='548' y='117.95' width='14' height='1.1' fill='#666'/><rect x='548' y='120.95' width='14' height='1.1' fill='#666'/><rect x='570' y='107' width='1' height='21' fill='#C8C8C8'/><path d='M581.3 110 v14 M579 112.3 l2.3 -2.6 l2.3 2.6 M579 121.7 l2.3 2.6 l2.3 -2.6' fill='none' stroke='#3A75C4' stroke-width='1.4'/><rect x='585.3' y='111.75' width='7.7000000000000455' height='1.1' fill='#666'/><rect x='585.3' y='114.75' width='7.7000000000000455' height='1.1' fill='#666'/><rect x='585.3' y='117.85000000000001' width='7.7000000000000455' height='1.1' fill='#666'/><rect x='585.3' y='120.95' width='7.7000000000000455' height='1.1' fill='#666'/><path d='M599.5 116 l2.5 2.5 l2.5 -2.5' fill='none' stroke='#595959' stroke-width='1.1'/><rect x='615' y='107' width='1' height='21' fill='#C8C8C8'/><path d='M625.5 115 l5.5 -5.5 l5.5 5.5 l-5.5 5.5 z' fill='#fff' stroke='#595959' stroke-width='1'/><path d='M629 109.5 v5' stroke='#595959' stroke-width='1'/><path d='M636.5 113.5 q3 1 2 5 l-2 0.5 z' fill='#3A75C4'/><rect x='623.5' y='121.5' width='15' height='3' fill='#fff' stroke='#7A7A7A' stroke-width='1'/><path d='M646.5 116 l2.5 2.5 l2.5 -2.5' fill='none' stroke='#595959' stroke-width='1.1'/><g fill='#6A6A6A'><rect x='663.0' y='110' width='1' height='1'/><rect x='663.0' y='115.5' width='1' height='1'/><rect x='664.9' y='110' width='1' height='1'/><rect x='664.9' y='115.5' width='1' height='1'/><rect x='666.8' y='110' width='1' height='1'/><rect x='666.8' y='115.5' width='1' height='1'/><rect x='668.7' y='110' width='1' height='1'/><rect x='668.7' y='115.5' width='1' height='1'/><rect x='670.6' y='110' width='1' height='1'/><rect x='670.6' y='115.5' width='1' height='1'/><rect x='672.5' y='110' width='1' height='1'/><rect x='672.5' y='115.5' width='1' height='1'/><rect x='674.4' y='110' width='1' height='1'/><rect x='674.4' y='115.5' width='1' height='1'/><rect x='676.3' y='110' width='1' height='1'/><rect x='676.3' y='115.5' width='1' height='1'/><rect x='663' y='110.0' width='1' height='1'/><rect x='669.5' y='110.0' width='1' height='1'/><rect x='676' y='110.0' width='1' height='1'/><rect x='663' y='111.9' width='1' height='1'/><rect x='669.5' y='111.9' width='1' height='1'/><rect x='676' y='111.9' width='1' height='1'/><rect x='663' y='113.8' width='1' height='1'/><rect x='669.5' y='113.8' width='1' height='1'/><rect x='676' y='113.8' width='1' height='1'/><rect x='663' y='115.7' width='1' height='1'/><rect x='669.5' y='115.7' width='1' height='1'/><rect x='676' y='115.7' width='1' height='1'/><rect x='663' y='117.6' width='1' height='1'/><rect x='669.5' y='117.6' width='1' height='1'/><rect x='676' y='117.6' width='1' height='1'/><rect x='663' y='119.5' width='1' height='1'/><rect x='669.5' y='119.5' width='1' height='1'/><rect x='676' y='119.5' width='1' height='1'/></g><rect x='663' y='121.7' width='13.5' height='1.1' fill='#6A6A6A'/><path d='M685.5 116 l2.5 2.5 l2.5 -2.5' fill='none' stroke='#595959' stroke-width='1.1'/><g fill='none' stroke='#7A7A7A' stroke-width='0.9'><path d='M699.5 151.5 v-7 h7'/><path d='M701.5 146.5 l4.5 4.5 M706 148 v3 h-3'/></g><rect x='710' y='68' width='1' height='84' fill='#D2D2D2'/></svg>
<svg style='left:715px;top:64px;' width='645' height='92' viewBox='715 64 645 92'><rect x='786.5' y='74' width='12.5' height='30' fill='#fff'/><rect x='858.5' y='74' width='13.5' height='30' fill='#fff'/><rect x='930.5' y='74' width='13.5' height='30' fill='#fff'/><rect x='1003.5' y='74' width='12.5' height='30' fill='#fff'/><rect x='1071.5' y='74' width='16.5' height='30' fill='#fff'/><rect x='1147.5' y='74' width='7.5' height='30' fill='#fff'/><rect x='722.5' y='72.5' width='71' height='55' fill='none' stroke='#A3A3A3' stroke-width='1'/><rect x='724.5' y='74.5' width='67' height='51' fill='none' stroke='#D4D4D4' stroke-width='3'/><rect x='1155.5' y='70.5' width='13.5' height='58.5' fill='#fff' stroke='#C6C6C6' stroke-width='1'/><rect x='1156' y='71' width='12.5' height='20' fill='#EBEBEB'/><path d='M1159 83.5 h6.5 l-3.25 -3.3 z' fill='#C0C0C0'/><rect x='1155.5' y='91' width='13.5' height='1' fill='#DADADA'/><path d='M1159 99.5 h6.5 l-3.25 3.3 z' fill='#444'/><rect x='1155.5' y='110' width='13.5' height='1' fill='#DADADA'/><rect x='1159' y='116' width='6.5' height='1' fill='#444'/><path d='M1159 119 h6.5 l-3.25 3.3 z' fill='#444'/><g fill='none' stroke='#7A7A7A' stroke-width='0.9'><path d='M1169.5 151.5 v-7 h7'/><path d='M1171.5 146.5 l4.5 4.5 M1176 148 v3 h-3'/></g><rect x='1180' y='68' width='1' height='84' fill='#D2D2D2'/><rect x='1296' y='68' width='1' height='84' fill='#D2D2D2'/><circle cx='1202' cy='76.5' r='3.8' fill='none' stroke='#2F6EBA' stroke-width='1.7'/><path d='M1199.3 79.3 l-5 4.5' stroke='#2F6EBA' stroke-width='2.2' stroke-linecap='round'/><path d='M1257.8 78.5 l2.5 2.5 l2.5 -2.5' fill='none' stroke='#595959' stroke-width='1.1'/><text x='1191.5' y='100.5' font-size='10' font-family='Liberation Sans' textLength='12' lengthAdjust='spacingAndGlyphs'><tspan fill='#555'>a</tspan><tspan fill='#8A44B0'>b</tspan></text><text x='1197' y='107.6' font-size='10' font-family='Liberation Sans' textLength='11.5' lengthAdjust='spacingAndGlyphs'><tspan fill='#555'>a</tspan><tspan fill='#2F6EBA'>c</tspan></text><path d='M1195.5 103.5 l-2.5 2.2 h3.5 M1193 105.7 l1.3 1.3' fill='none' stroke='#2F6EBA' stroke-width='0.9'/><path d='M1196.5 117 v12.5 l3 -3 l2.3 4.5 l1.7 -0.8 l-2.2 -4.4 h4.2 z' fill='#fff' stroke='#505050' stroke-width='1' stroke-linejoin='round'/><path d='M1275.5 124.5 l2.5 2.5 l2.5 -2.5' fill='none' stroke='#595959' stroke-width='1.1'/><path d='M1338 151 l6.5 -6.5 l6.5 6.5' fill='none' stroke='#505050' stroke-width='1.2'/></svg>
<svg style='left:0px;top:157px;' width='1360' height='35' viewBox='0 157 1360 35'>
<circle cx='20' cy='175' r='11' fill='#3C6DB3'/>
<rect x='18.6' y='172.5' width='2.8' height='8.5' fill='#fff'/>
<circle cx='20' cy='169' r='1.7' fill='#fff'/>
<path d='M1341 170.2 l8 8 M1349 170.2 l-8 8' stroke='#555' stroke-width='2'/>
</svg>
<svg style='left:0px;top:192px;' width='350' height='130' viewBox='0 192 350 130'>
<path d='M278.5 211 l6.5 6.5 l6.5 -6.5' fill='none' stroke='#444' stroke-width='1.2'/>
<path d='M321 209.5 l10 10 M331 209.5 l-10 10' stroke='#444' stroke-width='1.2'/>
<circle cx='313' cy='254.5' r='3.8' fill='none' stroke='#2B579A' stroke-width='1.8'/>
<path d='M310.3 257.2 l-4.8 4.8' stroke='#2B579A' stroke-width='2.3' stroke-linecap='round'/>
<path d='M323.3 258 l2 2 l2 -2' fill='none' stroke='#555' stroke-width='1'/>
<rect x='14' y='308' width='39' height='3' fill='#2B579A'/>
</svg>
<svg style='left:350px;top:192px;' width='1010' height='520' viewBox='350 192 1010 520'><text x='461.0' y='204.5' font-size='9' fill='#444' font-family='Liberation Sans' text-anchor='middle'>3</text><rect x='469.9' y='200.5' width='1' height='1' fill='#555'/><rect x='479.4' y='199' width='1' height='4' fill='#555'/><rect x='488.8' y='200.5' width='1' height='1' fill='#555'/><text x='498.8' y='204.5' font-size='9' fill='#444' font-family='Liberation Sans' text-anchor='middle'>2</text><rect x='507.8' y='200.5' width='1' height='1' fill='#555'/><rect x='517.2' y='199' width='1' height='4' fill='#555'/><rect x='526.6' y='200.5' width='1' height='1' fill='#555'/><text x='536.6' y='204.5' font-size='9' fill='#444' font-family='Liberation Sans' text-anchor='middle'>1</text><rect x='545.5' y='200.5' width='1' height='1' fill='#555'/><rect x='555.0' y='199' width='1' height='4' fill='#555'/><rect x='564.4' y='200.5' width='1' height='1' fill='#555'/><rect x='583.4' y='200.5' width='1' height='1' fill='#555'/><rect x='592.8' y='199' width='1' height='4' fill='#555'/><rect x='602.2' y='200.5' width='1' height='1' fill='#555'/><text x='612.2' y='204.5' font-size='9' fill='#444' font-family='Liberation Sans' text-anchor='middle'>1</text><rect x='621.1' y='200.5' width='1' height='1' fill='#555'/><rect x='630.6' y='199' width='1' height='4' fill='#555'/><rect x='640.0' y='200.5' width='1' height='1' fill='#555'/><text x='650.0' y='204.5' font-size='9' fill='#444' font-family='Liberation Sans' text-anchor='middle'>2</text><rect x='658.9' y='200.5' width='1' height='1' fill='#555'/><rect x='668.4' y='199' width='1' height='4' fill='#555'/><rect x='677.8' y='200.5' width='1' height='1' fill='#555'/><text x='687.8' y='204.5' font-size='9' fill='#444' font-family='Liberation Sans' text-anchor='middle'>3</text><rect x='696.8' y='200.5' width='1' height='1' fill='#555'/><rect x='706.2' y='199' width='1' height='4' fill='#555'/><rect x='715.6' y='200.5' width='1' height='1' fill='#555'/><text x='725.6' y='204.5' font-size='9' fill='#444' font-family='Liberation Sans' text-anchor='middle'>4</text><rect x='734.5' y='200.5' width='1' height='1' fill='#555'/><rect x='744.0' y='199' width='1' height='4' fill='#555'/><rect x='753.4' y='200.5' width='1' height='1' fill='#555'/><text x='763.4' y='204.5' font-size='9' fill='#444' font-family='Liberation Sans' text-anchor='middle'>5</text><rect x='772.3' y='200.5' width='1' height='1' fill='#555'/><rect x='781.8' y='199' width='1' height='4' fill='#555'/><rect x='791.2' y='200.5' width='1' height='1' fill='#555'/><text x='801.2' y='204.5' font-size='9' fill='#444' font-family='Liberation Sans' text-anchor='middle'>6</text><rect x='810.1' y='200.5' width='1' height='1' fill='#555'/><rect x='819.6' y='199' width='1' height='4' fill='#555'/><rect x='829.0' y='200.5' width='1' height='1' fill='#555'/><text x='839.0' y='204.5' font-size='9' fill='#444' font-family='Liberation Sans' text-anchor='middle'>7</text><rect x='847.9' y='200.5' width='1' height='1' fill='#555'/><rect x='857.4' y='199' width='1' height='4' fill='#555'/><rect x='866.8' y='200.5' width='1' height='1' fill='#555'/><text x='876.8' y='204.5' font-size='9' fill='#444' font-family='Liberation Sans' text-anchor='middle'>8</text><rect x='885.8' y='200.5' width='1' height='1' fill='#555'/><rect x='895.2' y='199' width='1' height='4' fill='#555'/><rect x='904.6' y='200.5' width='1' height='1' fill='#555'/><text x='914.6' y='204.5' font-size='9' fill='#444' font-family='Liberation Sans' text-anchor='middle'>9</text><rect x='923.5' y='200.5' width='1' height='1' fill='#555'/><rect x='933.0' y='199' width='1' height='4' fill='#555'/><rect x='942.4' y='200.5' width='1' height='1' fill='#555'/><text x='952.4' y='204.5' font-size='9' fill='#444' font-family='Liberation Sans' text-anchor='middle'>10</text><rect x='961.3' y='200.5' width='1' height='1' fill='#555'/><rect x='970.8' y='199' width='1' height='4' fill='#555'/><rect x='980.2' y='200.5' width='1' height='1' fill='#555'/><text x='990.2' y='204.5' font-size='9' fill='#444' font-family='Liberation Sans' text-anchor='middle'>11</text><rect x='999.1' y='200.5' width='1' height='1' fill='#555'/><rect x='1008.6' y='199' width='1' height='4' fill='#555'/><rect x='1018.0' y='200.5' width='1' height='1' fill='#555'/><text x='1028.0' y='204.5' font-size='9' fill='#444' font-family='Liberation Sans' text-anchor='middle'>12</text><rect x='1036.9' y='200.5' width='1' height='1' fill='#555'/><rect x='1046.4' y='199' width='1' height='4' fill='#555'/><rect x='1055.8' y='200.5' width='1' height='1' fill='#555'/><text x='1065.8' y='204.5' font-size='9' fill='#444' font-family='Liberation Sans' text-anchor='middle'>13</text><rect x='1074.8' y='200.5' width='1' height='1' fill='#555'/><rect x='1084.2' y='199' width='1' height='4' fill='#555'/><rect x='1093.7' y='200.5' width='1' height='1' fill='#555'/><text x='1103.6' y='204.5' font-size='9' fill='#444' font-family='Liberation Sans' text-anchor='middle'>14</text><rect x='1112.5' y='200.5' width='1' height='1' fill='#555'/><rect x='1122.0' y='199' width='1' height='4' fill='#555'/><rect x='1131.4' y='200.5' width='1' height='1' fill='#555'/><rect x='1150.3' y='200.5' width='1' height='1' fill='#555'/><rect x='1159.8' y='199' width='1' height='4' fill='#555'/><rect x='1169.2' y='200.5' width='1' height='1' fill='#555'/><text x='1179.2' y='204.5' font-size='9' fill='#444' font-family='Liberation Sans' text-anchor='middle'>16</text><rect x='1188.2' y='200.5' width='1' height='1' fill='#555'/><rect x='1197.6' y='199' width='1' height='4' fill='#555'/><rect x='1207.0' y='200.5' width='1' height='1' fill='#555'/><text x='1217.0' y='204.5' font-size='9' fill='#444' font-family='Liberation Sans' text-anchor='middle'>17</text><rect x='1225.9' y='200.5' width='1' height='1' fill='#555'/><rect x='1235.4' y='199' width='1' height='4' fill='#555'/><rect x='1244.8' y='200.5' width='1' height='1' fill='#555'/><path d='M570.3 193.5 h8.5 v1.5 l-4.25 6.5 l-4.25 -6.5 z' fill='#fff' stroke='#8A8A8A' stroke-width='0.9'/><path d='M570.3 207 v-2 l4.25 -3.5 l4.25 3.5 v2 z' fill='#fff' stroke='#8A8A8A' stroke-width='0.9'/><rect x='570.3' y='207.5' width='8.5' height='6.8' fill='#fff' stroke='#8A8A8A' stroke-width='0.9'/><path d='M1136.5 210 v-3 l4.25 -4.5 l4.25 4.5 v3 z' fill='#fff' stroke='#8A8A8A' stroke-width='0.9'/><path d='M358 199 v6.5 h6' fill='none' stroke='#555' stroke-width='2'/><path d='M1347.5 227 h7 l-3.5 -4 z' fill='#222'/><path d='M1347.5 694 h7 l-3.5 4 z' fill='#222'/></svg>
<svg style='left:0px;top:706px;' width='1360' height='22' viewBox='0 706 1360 22'>
<g fill='none' stroke='#666' stroke-width='1'>
<path d='M168.5 711 h5.5 v10.5 h-5.5 z M174 711 h3 M174 721.5 h7.5 v-5'/>
<path d='M174 711 v11.5'/>
<path d='M176.5 716 l2 2 l3.5 -4.5'/>
</g>
<g fill='none' stroke='#555' stroke-width='1.2'>
<path d='M313 711.5 a6.5 6.5 0 1 0 4.5 9' stroke-dasharray='2.5 1.5'/>
<path d='M311 710.5 v6 h4'/>
</g>
<path d='M315 718 l6 6 M321 718 l-6 6' stroke='#333' stroke-width='1.6'/>
<g fill='none' stroke='#666' stroke-width='1'>
<path d='M1073.5 711 h5.5 v10 h-5.5 z M1079 711 h5.5 v10 h-5.5 z M1075 713.5 h2.5 M1075 716 h2.5 M1075 718.5 h2.5 M1080.5 713.5 h2.5 M1080.5 716 h2.5 M1080.5 718.5 h2.5'/>
<path d='M1079 721 v2'/>
<rect x='1113.5' y='711.5' width='13' height='11'/>
<path d='M1115.5 714 h9 M1115.5 716.5 h9 M1115.5 719 h9'/>
<path d='M1153.5 722 v-10.5 h9 v3 M1155.5 714 h5 M1155.5 716.5 h3 M1155.5 719 h3'/>
</g>
<circle cx='1163' cy='719.5' r='3.8' fill='#666'/>
<path d='M1160.5 719 q2.5 -1.5 5 0 M1163 716 v7' stroke='#F3F3F3' stroke-width='0.7' fill='none'/>
<rect x='1186' y='716.5' width='7.5' height='1.1' fill='#444'/>
<rect x='1199' y='716.5' width='100' height='1.2' fill='#555'/>
<rect x='1247' y='711.5' width='5' height='11.5' fill='#444'/>
<path d='M1304 717.1 h7.5 M1307.75 713.3 v7.5' stroke='#444' stroke-width='1.1'/>
</svg>
<svg style='left:0px;top:728px;' width='1360' height='40' viewBox='0 728 1360 40'>
<defs>
<linearGradient id='edgeg' x1='0' y1='0' x2='1' y2='1'><stop offset='0' stop-color='#35C1F1'/><stop offset='0.5' stop-color='#2C9BE0'/><stop offset='1' stop-color='#0B55A8'/></linearGradient>
<linearGradient id='edgeg2' x1='0' y1='0' x2='1' y2='0'><stop offset='0' stop-color='#2FD28A'/><stop offset='1' stop-color='#59D13E'/></linearGradient>
<linearGradient id='ffg' x1='0' y1='0' x2='0' y2='1'><stop offset='0' stop-color='#FFBD2E'/><stop offset='0.5' stop-color='#FF6A2D'/><stop offset='1' stop-color='#E62D5A'/></linearGradient>
</defs>
<!-- windows -->
<g fill='#fff'>
<rect x='15.5' y='740' width='8' height='7.5'/><rect x='24.5' y='740' width='8' height='7.5'/>
<rect x='15.5' y='748.5' width='8' height='7.5'/><rect x='24.5' y='748.5' width='8' height='7.5'/>
</g>
<!-- search -->
<circle cx='74.5' cy='745.5' r='5.5' fill='none' stroke='#fff' stroke-width='1.3'/>
<path d='M70.5 749.5 l-6 6' stroke='#fff' stroke-width='1.5'/>
<!-- edge -->
<circle cx='122.6' cy='748' r='12' fill='url(#edgeg)'/>
<path d='M112 745 q4 -10 14 -9 q9 1 9 10 q0 5 -6 5 q-6 0 -7 -4 q4 -3 8 -1 q0 -6 -7 -6 q-8 0 -11 5 z' fill='url(#edgeg2)'/>
<path d='M116 752 q0 -7 8 -7 q-4 3 -3 7 q2 6 9 5 q-5 5 -11 1 q-3 -2 -3 -6 z' fill='#0F3F88'/>
<!-- chrome -->
<path d='M172 748 L182.39 742.00 A12 12 0 0 0 161.61 742.00 Z' fill='#DB4437'/><path d='M172 748 L161.61 742.00 A12 12 0 0 0 172.00 760.00 Z' fill='#0F9D58'/><path d='M172 748 L172.00 760.00 A12 12 0 0 0 182.39 742.00 Z' fill='#FFCD40'/><circle cx='172' cy='748' r='5.5' fill='#fff'/><circle cx='172' cy='748' r='4.2' fill='#4285F4'/>
<!-- word -->
<rect x='214' y='737' width='19.5' height='21' rx='1' fill='#41A5EE'/>
<rect x='214' y='744' width='19.5' height='7' fill='#2B7CD3'/>
<rect x='214' y='751' width='19.5' height='7' rx='1' fill='#185ABD'/>
<rect x='208.5' y='742' width='12' height='12' rx='1' fill='#185ABD'/>
<text x='214.5' y='752' font-size='9.5' font-weight='bold' fill='#fff' font-family='Liberation Sans' text-anchor='middle'>W</text>
<rect x='197' y='766' width='48' height='2' fill='#76B9ED'/>
<!-- explorer -->
<path d='M258.5 740 h8 l2 2 h12 v15 h-22 z' fill='#F8C03A'/>
<rect x='258.5' y='744' width='22' height='13' fill='#FFD769'/>
<rect x='263' y='751' width='13' height='6.5' fill='#2F7FD6'/>
<rect x='266' y='753.5' width='7' height='4' fill='#FFD769'/>
<rect x='250' y='766' width='31' height='2' fill='#76B9ED'/><rect x='281' y='766' width='9' height='2' fill='#4A7DA8'/>
<!-- excel -->
<rect x='312' y='737' width='19.5' height='21' rx='1' fill='#21A366'/>
<rect x='321' y='737' width='10.5' height='7' fill='#33C481'/>
<rect x='312' y='751' width='19.5' height='7' rx='1' fill='#107C41'/>
<rect x='306.5' y='742' width='12' height='12' rx='1' fill='#107C41'/>
<text x='312.5' y='752' font-size='9.5' font-weight='bold' fill='#fff' font-family='Liberation Sans' text-anchor='middle'>X</text>
<!-- firefox -->
<circle cx='368' cy='749' r='11' fill='url(#ffg)'/>
<circle cx='368.5' cy='750' r='6.2' fill='#6E3FD8'/>
<path d='M358 746 q1 -8 8 -10 q-2 3 0 5 q-5 0 -8 5 z' fill='#FFB33A'/>
<path d='M372 737 q8 3 8 12 q-3 -6 -8 -7 z' fill='#FFC93A'/>
<!-- spotify -->
<circle cx='417' cy='748' r='11.5' fill='#1ED760'/>
<g fill='none' stroke='#111' stroke-linecap='round'>
<path d='M410.5 744.5 q7 -2.5 13.5 0.8' stroke-width='2.2'/>
<path d='M411.5 748.3 q5.5 -2 11.5 0.7' stroke-width='1.9'/>
<path d='M412.5 751.8 q4.5 -1.5 9 0.5' stroke-width='1.6'/>
</g>
<rect x='397' y='766' width='40' height='2' fill='#76B9ED'/>
<!-- chrome profile -->
<path d='M465.5 748 L475.89 742.00 A12 12 0 0 0 455.11 742.00 Z' fill='#DB4437'/><path d='M465.5 748 L455.11 742.00 A12 12 0 0 0 465.50 760.00 Z' fill='#0F9D58'/><path d='M465.5 748 L465.50 760.00 A12 12 0 0 0 475.89 742.00 Z' fill='#FFCD40'/><circle cx='465.5' cy='748' r='5.2' fill='#fff'/><circle cx='465.5' cy='748' r='4' fill='#4285F4'/>
<circle cx='472' cy='755' r='7' fill='#8A8A8A'/>
<circle cx='472' cy='753.5' r='3' fill='#E0E0E0'/>
<path d='M466.5 759.5 q5.5 -6 11 0' fill='#E0E0E0'/>
<rect x='446' y='766' width='40' height='2' fill='#76B9ED'/>
<!-- paint -->
<path d='M503 750 q0 -9 11 -10 q10 -1 11 6 q0 4 -5 4 q-3 0 -3 3 q0 4 -5 4 q-9 0 -9 -7 z' fill='#C9D9EA'/>
<circle cx='509' cy='745' r='1.8' fill='#E04040'/><circle cx='514' cy='742.5' r='1.8' fill='#F7C030'/><circle cx='519.5' cy='744' r='1.8' fill='#40A040'/><circle cx='507.5' cy='750' r='1.8' fill='#3A70D0'/>
<path d='M514 758 l12 -20' stroke='#D8A060' stroke-width='2.5'/>
<rect x='495' y='766' width='40' height='2' fill='#76B9ED'/>
<!-- acrobat -->
<rect x='553' y='737' width='22' height='21' rx='3' fill='#B30B00'/>
<path d='M557 753 q5 -4 9 -12 q1 -3 -1 -3 q-2 0 -1 4 q2 6 9 9 q2 1 2 -1 q-1 -2 -9 0 q-6 2 -9 3 z' fill='none' stroke='#fff' stroke-width='1.2'/>
<rect x='544' y='766' width='31' height='2' fill='#76B9ED'/><rect x='575' y='766' width='8' height='2' fill='#4A7DA8'/>
<!-- tray -->
<path d='M1117 750.5 l6.3 -6.3 l6.3 6.3' fill='none' stroke='#fff' stroke-width='1.1'/>
<g fill='none' stroke='#fff' stroke-width='1.1'>
<rect x='1142.5' y='744.5' width='7.5' height='7' rx='1.5'/>
<path d='M1150 746.5 l3 -1.5 v5.5 l-3 -1.5'/>
<path d='M1143 741 q3.5 -1.5 7 0 M1143 755 q3.5 1.5 7 0'/>
<rect x='1166.5' y='742.5' width='12' height='8.5'/>
<path d='M1172.5 751 v3 M1169.5 754.5 h6'/>
<path d='M1163.5 742.5 h4 v4 h-4 z M1165.5 746.5 v8'/>
<path d='M1187.5 746.5 h3 l4 -3.5 v11 l-4 -3.5 h-3 z'/>
<path d='M1197 746 q1.5 2.5 0 5 M1199.5 744 q3 4.5 0 9 M1202 742.5 q4 6 0 12'/>
</g>
<path d='M1319.5 740.5 h15.5 v11 h-8 l-3.5 3 v-3 h-4 z' fill='#fff'/>
<path d='M1322 743.5 h10.5 M1322 746 h10.5 M1322 748.5 h10.5' stroke='#111' stroke-width='0.9'/>
<circle cx='1334.5' cy='755.5' r='7.3' fill='#2A2A2A' stroke='#9A9A9A' stroke-width='1'/>
<text x='1334.5' y='759.3' font-size='10' fill='#fff' font-family='Liberation Sans' text-anchor='middle'>1</text>
<rect x='1355' y='728' width='1' height='40' fill='#5A5A5A'/>
</svg>
</body></html>
